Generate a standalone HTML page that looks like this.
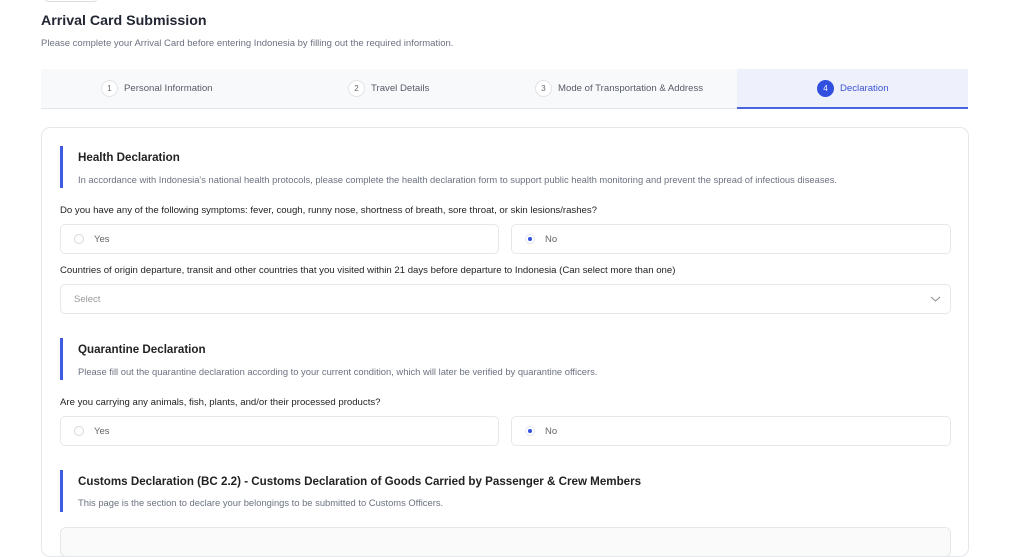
<!DOCTYPE html>
<html><head><meta charset="utf-8"><style>
*{margin:0;padding:0;box-sizing:border-box}
body{width:1024px;height:536px;overflow:hidden;background:#fff;font-family:"Liberation Sans",sans-serif;color:#1f2430;position:relative}
.a{position:absolute}
.tabtop{left:45px;top:-4px;width:52px;height:6px;border:1px solid #ddd;border-radius:4px}
h1{position:absolute;left:41px;top:13px;font-size:14.2px;font-weight:bold;color:#222733}
.sub{left:41px;top:38px;font-size:9.5px;color:#6b7280}
.steps{left:41px;top:69px;width:927px;height:40px;background:#f8f9fb;border-bottom:1px solid #e3e6ea}
.act{left:737px;top:69px;width:231px;height:40px;background:#eef1fc;border-bottom:2px solid #4a63e0}
.st{position:absolute;top:80px;font-size:9.6px;color:#555b66;display:flex;align-items:center}
.st i{display:inline-block;width:17px;height:17px;border:1px solid #e2e4e8;border-radius:50%;background:#fff;font-style:normal;font-size:8px;text-align:center;line-height:15px;margin-right:6px;color:#666}
.st.on{color:#3b53d4}.st.on i{background:#3150e0;border-color:#3150e0;color:#fff}
.card{left:41px;top:127px;width:928px;height:430px;border:1px solid #e5e7eb;border-radius:9px}
.bar{position:absolute;left:60px;width:3px;background:#3f5be0}
.hd{position:absolute;left:78px;font-size:11.6px;font-weight:bold;color:#222}
.ds{position:absolute;left:78px;font-size:9.4px;color:#6b7280}
.q{position:absolute;left:60px;font-size:9.6px;color:#1f1f1f}
.box{position:absolute;height:30px;border:1px solid #e5e7eb;border-radius:5px;font-size:9.5px;color:#666;display:flex;align-items:center;padding-left:13px}
.box b{display:inline-block;width:10px;height:10px;border:1px solid #d5d8dd;border-radius:50%;margin-right:10px;position:relative}
.box b.on::after{content:"";position:absolute;left:2px;top:2px;width:4px;height:4px;border-radius:50%;background:#3150e0}
.box b.on{border-color:#e3e7f5}
</style></head><body>
<div class="a tabtop"></div>
<h1>Arrival Card Submission</h1>
<div class="a sub">Please complete your Arrival Card before entering Indonesia by filling out the required information.</div>
<div class="a steps"></div>
<div class="a act"></div>
<div class="st" style="left:101px"><i>1</i>Personal Information</div>
<div class="st" style="left:348px"><i>2</i>Travel Details</div>
<div class="st" style="left:535px"><i>3</i>Mode of Transportation &amp; Address</div>
<div class="st on" style="left:817px"><i>4</i>Declaration</div>
<div class="a card"></div>

<div class="bar" style="top:146px;height:42px"></div>
<div class="hd" style="top:151px">Health Declaration</div>
<div class="ds" style="top:174px">In accordance with Indonesia's national health protocols, please complete the health declaration form to support public health monitoring and prevent the spread of infectious diseases.</div>
<div class="q" style="top:205px">Do you have any of the following symptoms: fever, cough, runny nose, shortness of breath, sore throat, or skin lesions/rashes?</div>
<div class="box" style="left:60px;top:224px;width:439px"><b></b>Yes</div>
<div class="box" style="left:511px;top:224px;width:440px"><b class="on"></b>No</div>
<div class="q" style="top:265px">Countries of origin departure, transit and other countries that you visited within 21 days before departure to Indonesia (Can select more than one)</div>
<div class="box" style="left:60px;top:284px;width:891px;color:#999">Select
<svg style="position:absolute;right:9px;top:10px" width="11" height="8" viewBox="0 0 11 8"><path d="M1 2 L5.5 6 L10 2" fill="none" stroke="#888" stroke-width="1"/></svg></div>

<div class="bar" style="top:338px;height:42px"></div>
<div class="hd" style="top:343px">Quarantine Declaration</div>
<div class="ds" style="top:366px">Please fill out the quarantine declaration according to your current condition, which will later be verified by quarantine officers.</div>
<div class="q" style="top:397px">Are you carrying any animals, fish, plants, and/or their processed products?</div>
<div class="box" style="left:60px;top:416px;width:439px"><b></b>Yes</div>
<div class="box" style="left:511px;top:416px;width:440px"><b class="on"></b>No</div>

<div class="bar" style="top:470px;height:42px"></div>
<div class="hd" style="top:475px">Customs Declaration (BC 2.2) - Customs Declaration of Goods Carried by Passenger &amp; Crew Members</div>
<div class="ds" style="top:497px">This page is the section to declare your belongings to be submitted to Customs Officers.</div>
<div class="a" style="left:60px;top:527px;width:891px;height:30px;border:1px solid #e5e7eb;border-radius:6px;background:#fafafa"></div>
</body></html>
